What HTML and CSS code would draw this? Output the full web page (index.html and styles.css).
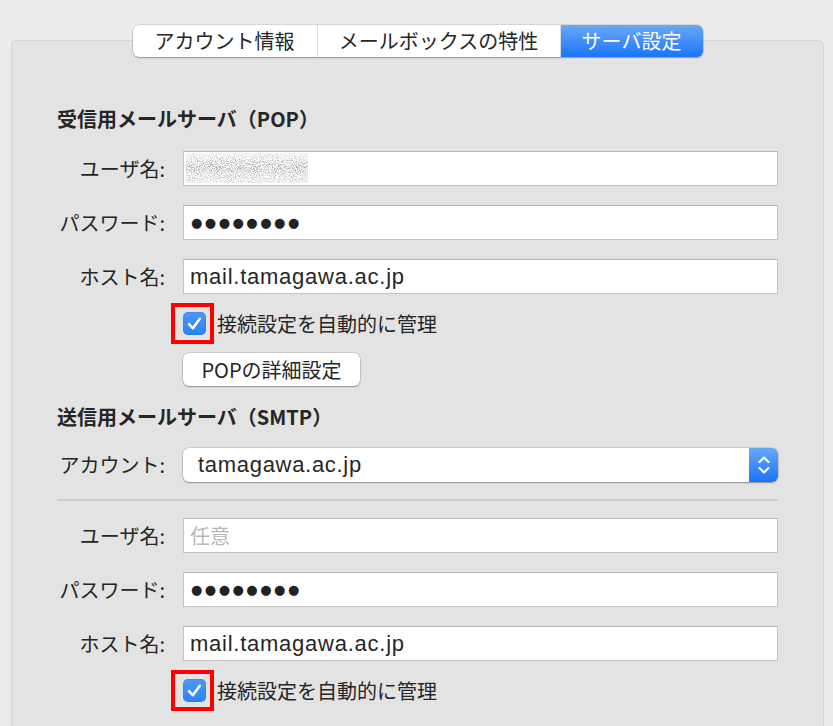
FILE: index.html
```html
<!DOCTYPE html>
<html lang="ja">
<head>
<meta charset="utf-8">
<link rel="stylesheet" href="styles.css">
</head>
<body>
<div class="panel">
  <div class="tabs">
    <div class="tab">アカウント情報</div>
    <div class="tab">メールボックスの特性</div>
    <div class="tab active">サーバ設定</div>
  </div>

  <h2 class="section-title">受信用メールサーバ（POP）</h2>
  <div class="form">
    <label class="label">ユーザ名:</label>
    <div class="field blurred">
      <svg class="noise" width="122" height="30" viewBox="0 0 122 30">
        <defs>
          <filter id="nz" x="0" y="0" width="100%" height="100%">
            <feTurbulence type="fractalNoise" baseFrequency="0.95" numOctaves="2" seed="7"/>
            <feColorMatrix type="matrix" values="0 0 0 0 0.25  0 0 0 0 0.25  0 0 0 0 0.25  2.4 0 0 0 -0.95"/>
          </filter>
          <linearGradient id="fade" x1="0" x2="0" y1="0" y2="1">
            <stop offset="0" stop-color="#fff" stop-opacity="0.35"/>
            <stop offset="0.5" stop-color="#fff" stop-opacity="1"/>
            <stop offset="1" stop-color="#fff" stop-opacity="0.45"/>
          </linearGradient>
          <mask id="mk"><rect width="122" height="30" fill="url(#fade)"/></mask>
        </defs>
        <rect width="122" height="30" filter="url(#nz)" mask="url(#mk)"/>
      </svg>
    </div>

    <label class="label">パスワード:</label>
    <div class="field dots">●●●●●●●●</div>

    <label class="label">ホスト名:</label>
    <div class="field">mail.tamagawa.ac.jp</div>

    <span></span>
    <div class="check-row">
      <span class="check-wrap">
        <span class="checkbox">
          <svg width="23" height="23" viewBox="0 0 23 23"><path d="M6 12.2 L9.8 16.2 L16.8 6.8" fill="none" stroke="#fff" stroke-width="2.6" stroke-linecap="round" stroke-linejoin="round"/></svg>
        </span>
        <span class="highlight"></span>
      </span>
      <span class="check-text">接続設定を自動的に管理</span>
    </div>

    <span></span>
    <div class="btn-row"><button class="btn">POPの詳細設定</button></div>
  </div>

  <h2 class="section-title second">送信用メールサーバ（SMTP）</h2>
  <div class="form">
    <label class="label">アカウント:</label>
    <div class="popup">
      <span class="popup-text">tamagawa.ac.jp</span>
      <span class="stepper">
        <svg width="16" height="22" viewBox="0 0 16 22"><path d="M3.5 8 L8 3.5 L12.5 8 M3.5 14 L8 18.5 L12.5 14" fill="none" stroke="#fff" stroke-width="2" stroke-linecap="round" stroke-linejoin="round"/></svg>
      </span>
    </div>
  </div>
  <div class="separator"></div>
  <div class="form">
    <label class="label">ユーザ名:</label>
    <div class="field placeholder">任意</div>

    <label class="label">パスワード:</label>
    <div class="field dots">●●●●●●●●</div>

    <label class="label">ホスト名:</label>
    <div class="field">mail.tamagawa.ac.jp</div>

    <span></span>
    <div class="check-row">
      <span class="check-wrap">
        <span class="checkbox">
          <svg width="23" height="23" viewBox="0 0 23 23"><path d="M6 12.2 L9.8 16.2 L16.8 6.8" fill="none" stroke="#fff" stroke-width="2.6" stroke-linecap="round" stroke-linejoin="round"/></svg>
        </span>
        <span class="highlight"></span>
      </span>
      <span class="check-text">接続設定を自動的に管理</span>
    </div>
  </div>
</div>
</body>
</html>
```
FILE: styles.css
```css
* { box-sizing: border-box; }
html, body {
  margin: 0;
  padding: 0;
  background: #ececec;
  width: 833px;
  height: 726px;
  overflow: hidden;
  font-family: "Noto Sans CJK JP", "Liberation Sans", sans-serif;
  color: #262626;
}
.panel {
  margin: 40px 9px 0 11px;
  background: #e3e3e3;
  border: 1px solid #d4d4d4;
  border-radius: 5px;
  height: 720px;
  padding: 0 45px 0 45px;
}
.tabs {
  display: flex;
  width: 570px;
  margin: -16px auto 0;
  height: 32px;
  background: #fff;
  border-radius: 6px;
  box-shadow: 0 0 0 0.5px rgba(0,0,0,0.18), 0 1px 1.5px rgba(0,0,0,0.28);
  overflow: hidden;
}
.tab {
  display: flex;
  align-items: center;
  justify-content: center;
  font-size: 20px;
  line-height: 1;
  color: #262626;
  border-right: 1px solid #dcdcdc;
}
.tab:nth-child(1) { width: 185px; }
.tab:nth-child(2) { width: 243px; }
.tab.active {
  width: 142px;
  border-right: none;
  color: #fff;
  background: linear-gradient(#6aa8f8, #1a74f6);
}
.section-title {
  margin: 0;
  font-size: 20px;
  font-weight: bold;
  line-height: 28px;
  padding-top: 48px;
  height: 94px;
  color: #262626;
}
.section-title.second {
  padding-top: 17px;
  height: 61px;
}
.form {
  display: grid;
  grid-template-columns: 108px 595px;
  column-gap: 18px;
  row-gap: 19px;
  align-items: center;
}
.label {
  text-align: right;
  font-size: 20px;
  line-height: 35px;
  color: #262626;
  white-space: nowrap;
}
.field {
  height: 35px;
  background: #fff;
  border: 1px solid #c3c3c3;
  border-top-color: #b5b5b5;
  font-size: 22px;
  letter-spacing: 0.75px;
  line-height: 33px;
  padding: 0 6px;
  font-family: "Liberation Sans", "Noto Sans CJK JP", sans-serif;
  color: #262626;
  white-space: nowrap;
}
.field.dots {
  font-family: "DejaVu Sans", sans-serif;
  font-size: 13px;
  letter-spacing: 2.5px;
  padding-left: 7px;
  color: #222;
}
.field.placeholder {
  font-family: "Noto Sans CJK JP", sans-serif;
  font-size: 20px;
  letter-spacing: 0;
  color: #b8b8b8;
}
.field.blurred {
  padding: 1px 2px;
}
.noise { display: block; }
.check-row {
  display: flex;
  align-items: center;
  height: 23px;
  margin-top: -1px;
}
.check-wrap {
  position: relative;
  width: 23px;
  height: 23px;
  margin-right: 11px;
}
.checkbox {
  display: block;
  width: 23px;
  height: 23px;
  border-radius: 5px;
  background: linear-gradient(#4d98f8, #2b83f6);
  box-shadow: inset 0 0 0 0.5px rgba(0,0,0,0.1);
}
.checkbox svg { display: block; }
.highlight {
  position: absolute;
  left: -12px;
  top: -9px;
  width: 43px;
  height: 41px;
  border: 4px solid #f00;
}
.check-text {
  font-size: 20px;
  line-height: 1;
  color: #262626;
}
.btn-row { display: flex; margin-top: -1px; }
.btn {
  width: 177px;
  height: 33px;
  padding: 0;
  background: #fff;
  border: none;
  border-radius: 6px;
  box-shadow: 0 0 0 0.5px rgba(0,0,0,0.2), 0 1px 1.5px rgba(0,0,0,0.3);
  font-family: "Noto Sans CJK JP", "Liberation Sans", sans-serif;
  font-size: 20px;
  color: #262626;
}
.popup {
  display: flex;
  height: 34px;
  background: #fff;
  border-radius: 6px;
  box-shadow: 0 0 0 0.5px rgba(0,0,0,0.2), 0 1px 1.5px rgba(0,0,0,0.3);
  overflow: hidden;
}
.popup-text {
  flex: 1;
  font-family: "Liberation Sans", sans-serif;
  font-size: 22px;
  letter-spacing: 0.7px;
  line-height: 34px;
  padding-left: 15px;
}
.stepper {
  width: 29px;
  display: flex;
  align-items: center;
  justify-content: center;
  background: linear-gradient(#6aa8f8, #1a74f6);
}
.separator {
  height: 2px;
  background: #cdcdcd;
  margin: 17px 0 17px 0;
  width: 721px;
}
```
